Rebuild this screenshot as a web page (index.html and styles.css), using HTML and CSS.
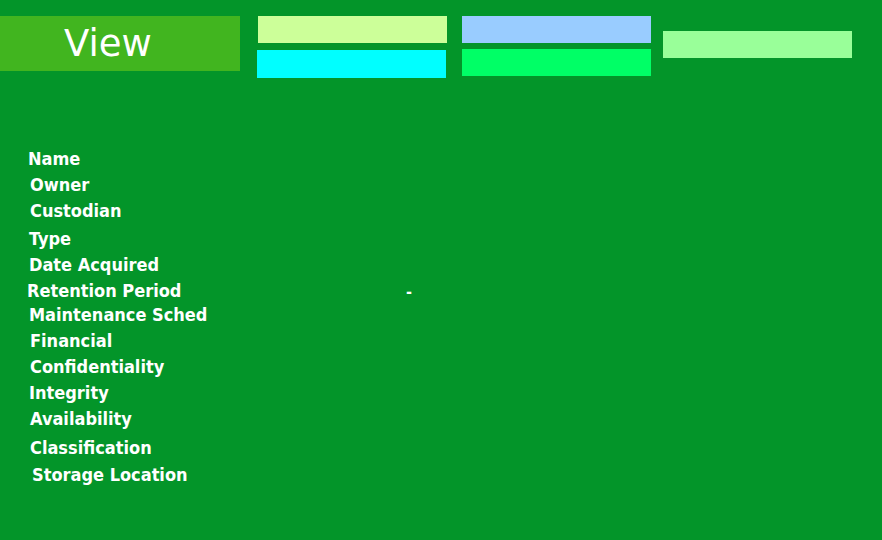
FILE: index.html
```html
<!DOCTYPE html>
<html>
<head>
<meta charset="utf-8">
<link rel="stylesheet" href="styles.css">
</head>
<body>
<div class="page">
  <header class="top">
    <div class="view-box">View</div>
    <div class="bar-col">
      <div class="bar bar-yellow"></div>
      <div class="bar bar-cyan"></div>
    </div>
    <div class="bar-col">
      <div class="bar bar-blue"></div>
      <div class="bar bar-green"></div>
    </div>
    <div class="bar-col single">
      <div class="bar bar-light"></div>
    </div>
  </header>
  <main class="fields">
    <div class="row r-name">Name</div>
    <div class="row r-owner">Owner</div>
    <div class="row r-cust">Custodian</div>
    <div class="row r-type">Type</div>
    <div class="row r-date">Date Acquired</div>
    <div class="row r-ret"><span class="lbl">Retention Period</span><span class="dash">-</span></div>
    <div class="row r-maint">Maintenance Sched</div>
    <div class="row r-fin">Financial</div>
    <div class="row r-conf">Confidentiality</div>
    <div class="row r-int">Integrity</div>
    <div class="row r-avail">Availability</div>
    <div class="row r-class">Classification</div>
    <div class="row r-stor">Storage Location</div>
  </main>
</div>
</body>
</html>
```
FILE: styles.css
```css
html, body {
  margin: 0;
  padding: 0;
  background: #039529;
}
.page {
  width: 882px;
  height: 540px;
  overflow: hidden;
  font-family: "DejaVu Sans", sans-serif;
  color: #ffffff;
}
.top {
  display: flex;
  align-items: flex-start;
  padding-top: 16px;
}
.view-box {
  width: 240px;
  height: 55px;
  background: #41b51f;
  color: #fff;
  font-family: "DejaVu Sans", sans-serif;
  font-size: 37px;
  line-height: 56px;
  text-align: left;
  box-sizing: border-box;
  padding-left: 64px;
}
.bar-col {
  display: flex;
  flex-direction: column;
  gap: 6px;
  margin-left: 16px;
  width: 190px;
}
.bar-col + .bar-col { margin-left: 16px; }
.bar-col.single { margin-left: 11px; padding-top: 15px; }
.bar {
  height: 27px;
  width: 189px;
}
.bar-yellow { background: #ccff99; margin-left: 2px; }
.bar-cyan { background: #00ffff; margin-left: 1px; height: 28px; margin-top: 1px; }
.bar-blue { background: #99ccff; }
.bar-green { background: #00ff66; }
.bar-light { background: #99ff99; }

.fields {
  padding-top: 68px;
  padding-left: 28px;
  font-family: "DejaVu Sans", sans-serif;
  font-stretch: condensed;
  font-size: 18px;
  font-weight: bold;
}
.row {
  height: 26px;
  line-height: 26px;
  white-space: nowrap;
  display: flex;
}
.r-owner { padding-left: 2px; }
.r-cust { padding-left: 2px; height: 25px; }
.r-type { padding-left: 1px; margin-top: 3px; }
.r-date { padding-left: 1px; }
.r-ret { padding-left: 0; margin-left: -1px; }
.r-maint { padding-left: 1px; margin-top: -2px; }
.r-fin { padding-left: 2px; }
.r-conf { padding-left: 2px; }
.r-int { padding-left: 1px; }
.r-avail { padding-left: 2px; }
.r-class { padding-left: 2px; margin-top: 3px; }
.r-stor { padding-left: 4px; margin-top: 1px; }
.lbl { width: 379px; }
.dash { font-size: 16px; line-height: 28px; }
```
